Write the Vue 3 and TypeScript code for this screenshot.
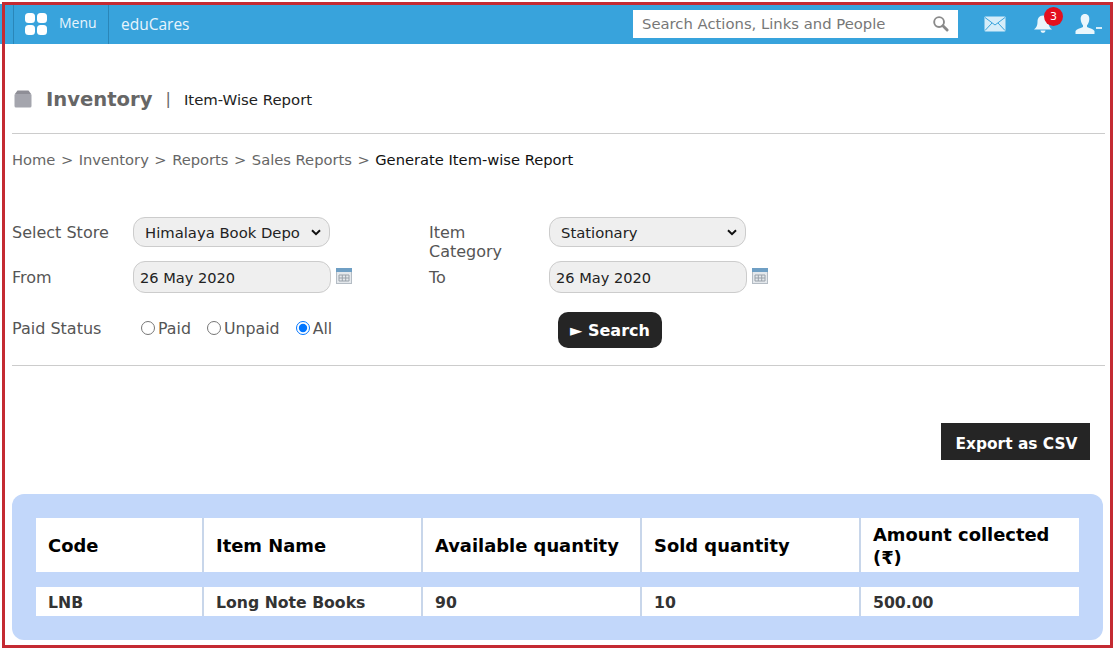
<template>
  <div class="page">
    <header class="topbar">
      <div class="menu-btn">
        <svg class="menu-icon" viewBox="0 0 22 22" width="22" height="22">
          <rect x="0" y="0" width="10" height="10" rx="3.5" fill="#fff" />
          <rect x="12" y="0" width="10" height="10" rx="3.5" fill="#fff" />
          <rect x="0" y="12" width="10" height="10" rx="3.5" fill="#fff" />
          <rect x="12" y="12" width="10" height="10" rx="3.5" fill="#fff" />
        </svg>
        <span class="menu-text">Menu</span>
      </div>
      <div class="brand">eduCares</div>
      <div class="search-box">
        <span class="search-text">Search Actions, Links and People</span>
        <svg class="search-icon" viewBox="0 0 18 18" width="17" height="17" fill="none" stroke="#8a8a8a">
          <circle cx="7.5" cy="7.5" r="5.2" stroke-width="2" />
          <path d="M11.5 11.5L16 16" stroke-width="3" stroke-linecap="round" />
        </svg>
      </div>
      <svg class="mail-icon" viewBox="0 0 22 16" width="22" height="16">
        <rect x="0.5" y="0.5" width="21" height="15" rx="1" fill="#d6edf9" />
        <path d="M1 1.5L11 9L21 1.5M1 14.5L8 7M21 14.5L14 7" fill="none" stroke="#38a3dc" stroke-width="1" />
      </svg>
      <div class="bell-wrap">
        <svg viewBox="0 0 20 20" width="20" height="20">
          <path d="M10 1.5C6 1.5 4.5 4.5 4.5 8C4.500 11.500 3.500 13.500 1 15.500H19C16.500 13.500 15.500 11.500 15.500 8C15.500 4.500 14 1.500 10 1.500Z" fill="#eaf6fc" />
          <path d="M7.500 16.500H12.500C12.300 18 11.300 18.800 10 18.800C8.700 18.800 7.700 18 7.500 16.500Z" fill="#eaf6fc" />
        </svg>
        <span class="badge">3</span>
      </div>
      <div class="user-wrap">
        <svg viewBox="0 0 20 22" width="20" height="22">
          <path d="M10 1C6.800 1 5.500 3.400 5.700 6.500C5.900 9 6.800 11 8 12.200V14C5 15.500 1.500 16 0.500 18V21H19.500V18C18.500 16 15 15.500 12 14V12.200C13.200 11 14.100 9 14.300 6.500C14.500 3.400 13.200 1 10 1Z" fill="#eaf6fc" />
        </svg>
        <span class="caret"></span>
      </div>
    </header>

    <main class="content">
      <div class="title-row">
        <svg class="box-icon" viewBox="0 0 18 18" width="18" height="18">
          <path d="M3.500 0.500H14.500L17.500 4.500H0.500Z" fill="#8e8e96" />
          <rect x="0.500" y="4" width="17" height="13.500" rx="1.500" fill="#a4a5ad" />
        </svg>
        <h1 class="title">Inventory</h1>
        <span class="title-sep">|</span>
        <span class="subtitle">Item-Wise Report</span>
      </div>

      <nav class="crumbs">
        <template v-for="c in crumbs" :key="c">
          <span>{{ c }}</span><span class="gt">&gt;</span>
        </template>
        <span class="crumb-current">Generate Item-wise Report</span>
      </nav>

      <form class="filter" @submit.prevent>
        <label class="lbl">Select Store</label>
        <select class="ctl sel">
          <option>Himalaya Book Depo</option>
        </select>
        <label class="lbl">Item<br />Category</label>
        <select class="ctl sel">
          <option>Stationary</option>
        </select>

        <label class="lbl lbl-date">From</label>
        <div class="date-cell">
          <input class="ctl date" value="26 May 2020" />
          <svg class="cal" viewBox="0 0 16 16" width="16" height="16">
            <rect x="0.500" y="0.500" width="15" height="15" fill="#e4e8ec" stroke="#b4bcc4" />
            <rect x="0" y="0" width="16" height="4" fill="#6f9fc4" />
            <path d="M3 7H13M3 10H13M3 13H13M3 7V13M6.300 7V13M9.700 7V13M13 7V13" stroke="#9aa2aa" stroke-width="1" fill="none" />
          </svg>
        </div>
        <label class="lbl lbl-date">To</label>
        <div class="date-cell">
          <input class="ctl date" value="26 May 2020" />
          <svg class="cal" viewBox="0 0 16 16" width="16" height="16">
            <rect x="0.500" y="0.500" width="15" height="15" fill="#e4e8ec" stroke="#b4bcc4" />
            <rect x="0" y="0" width="16" height="4" fill="#6f9fc4" />
            <path d="M3 7H13M3 10H13M3 13H13M3 7V13M6.300 7V13M9.700 7V13M13 7V13" stroke="#9aa2aa" stroke-width="1" fill="none" />
          </svg>
        </div>

        <label class="lbl status-lbl">Paid Status</label>
        <div class="radios">
          <label v-for="s in statuses" :key="s" class="radio">
            <input type="radio" name="paid" :value="s" v-model="status" />{{ s }}
          </label>
        </div>
        <div class="search-cell">
          <button class="search-btn" type="button">► Search</button>
        </div>
      </form>

      <div class="export-row">
        <button class="export-btn" type="button">Export as CSV</button>
      </div>

      <section class="panel">
        <div class="grid head">
          <div v-for="h in headers" :key="h" class="cell">{{ h }}</div>
        </div>
        <div class="grid row">
          <div v-for="(v, i) in rowData" :key="i" class="cell">{{ v }}</div>
        </div>
      </section>
    </main>

    <div class="frame"></div>
  </div>
</template>

<script setup lang="ts">
import { ref } from 'vue'

const crumbs = ['Home', 'Inventory', 'Reports', 'Sales Reports']
const statuses = ['Paid', 'Unpaid', 'All']
const status = ref('All')

const headers = ['Code', 'Item Name', 'Available quantity', 'Sold quantity', 'Amount collected (₹)']
const rowData = ['LNB', 'Long Note Books', '90', '10', '500.00']
</script>

<style>
html,
body {
  margin: 0;
  background: #fff;
  overflow: hidden;
}
</style>

<style scoped>
.page {
  position: relative;
  width: 1115px;
  height: 650px;
  overflow: hidden;
  background: #fff;
  font-family: "DejaVu Sans", Verdana, sans-serif;
  color: #555;
}

/* red frame sits on top of everything */
.frame {
  position: absolute;
  left: 2px;
  top: 2px;
  width: 1111px;
  height: 646px;
  box-sizing: border-box;
  border: 3px solid #c42a32;
  pointer-events: none;
}

.topbar {
  display: flex;
  align-items: center;
  height: 40px;
  margin-top: 4px;
  margin-right: 5px;
  background: #38a3dc;
}

.menu-btn {
  display: flex;
  align-items: center;
  height: 40px;
  margin-left: 13px;
  width: 94px;
  box-sizing: content-box;
  border-left: 1px solid #2a86b8;
  border-right: 1px solid #2a86b8;
}

.menu-icon {
  margin-left: 11px;
}

.menu-text {
  margin-left: 12px;
  margin-top: -3px;
  font-family: "Open Sans", sans-serif;
  font-size: 14px;
  color: #e8f5fc;
}

.brand {
  margin-left: 12px;
  font-family: "Open Sans", sans-serif;
  font-size: 15.5px;
  color: #e8f5fc;
}

.search-box {
  display: flex;
  align-items: center;
  justify-content: space-between;
  margin-left: auto;
  margin-top: -1px;
  width: 325px;
  height: 28px;
  box-sizing: border-box;
  padding: 0 9px;
  background: #fff;
}

.search-text {
  font-size: 14.8px;
  color: #777;
}

.mail-icon {
  margin-left: 26px;
}

.bell-wrap {
  position: relative;
  display: flex;
  margin-left: 27px;
}

.badge {
  position: absolute;
  left: 11px;
  top: -7px;
  width: 19px;
  height: 19px;
  border-radius: 50%;
  background: #e3101e;
  color: #fff;
  font-size: 11px;
  line-height: 19px;
  text-align: center;
}

.user-wrap {
  display: flex;
  align-items: center;
  margin-left: 22px;
  margin-right: 8px;
}

.caret {
  width: 6px;
  height: 2px;
  margin: 8px 0 0 1px;
  background: #d6edf9;
}

.content {
  padding: 0 10px 0 12px;
}

.title-row {
  display: flex;
  align-items: center;
  box-sizing: content-box;
  height: 67px;
  padding-top: 22px;
  border-bottom: 1px solid #ccc;
}

.box-icon {
  margin-left: 2px;
  margin-top: -2px;
}

.title {
  margin: 0 0 0 14px;
  font-size: 19.6px;
  font-weight: 700;
  color: #666;
}

.title-sep {
  margin: -2px 0 0 13px;
  font-size: 16px;
  color: #666;
}

.subtitle {
  margin-left: 13px;
  font-size: 14.9px;
  color: #222;
}

.crumbs {
  display: flex;
  height: 83px;
  padding-top: 17px;
  box-sizing: border-box;
  font-size: 14.7px;
  line-height: 18px;
  color: #666;
}

.gt {
  margin: 0 5.5px;
}

.crumb-current {
  color: #111;
}

.filter {
  display: grid;
  grid-template-columns: 121px 296px 120px 1fr;
  grid-template-rows: 44px 51px 73px;
  border-bottom: 1px solid #ccc;
  height: 148px;
}

.lbl {
  font-size: 16px;
  line-height: 19px;
  color: #555;
  padding-top: 6px;
  white-space: nowrap;
}

.lbl-date {
  padding-top: 7px;
}

.status-lbl {
  padding-top: 7px;
}

.ctl {
  box-sizing: border-box;
  font-family: "DejaVu Sans", Verdana, sans-serif;
  font-size: 14.8px;
  color: #222;
  background-color: #efefef;
  border: 1px solid #ccc;
}

.sel {
  appearance: none;
  width: 197px;
  height: 30px;
  padding-left: 11px;
  border-radius: 12px;
  background-image: url("data:image/svg+xml,%3Csvg xmlns='http://www.w3.org/2000/svg' width='10' height='7' viewBox='0 0 10 7'%3E%3Cpath d='M1 1.200L5 5.200L9 1.200' fill='none' stroke='%23111' stroke-width='2'/%3E%3C/svg%3E");
  background-repeat: no-repeat;
  background-position: right 8px center;
}

.date-cell {
  display: flex;
  align-items: flex-start;
}

.date {
  width: 198px;
  height: 32px;
  padding: 0 6px;
  border-radius: 12px;
  outline: none;
  font-size: 14.6px;
}

.cal {
  margin: 7px 0 0 5px;
}

.radios {
  display: flex;
  align-items: flex-start;
  padding-left: 7px;
  gap: 15px;
}

.radio {
  display: flex;
  align-items: center;
  height: 18px;
  margin-top: 7px;
  font-size: 15.8px;
  color: #555;
}

.radio input {
  width: 14px;
  height: 14px;
  margin: 0 3px 0 1px;
}

.search-cell {
  grid-column: 3 / 5;
  padding-left: 129px;
}

.search-btn {
  width: 104px;
  height: 36px;
  padding: 0;
  border: none;
  border-radius: 10px;
  background: #252525;
  color: #fff;
  font-family: "DejaVu Sans", Verdana, sans-serif;
  font-size: 16px;
  font-weight: 700;
}

.export-row {
  display: flex;
  justify-content: flex-end;
  height: 128px;
  padding-top: 57px;
  padding-right: 15px;
  box-sizing: border-box;
}

.export-btn {
  width: 149px;
  height: 37px;
  padding: 5px 0 0 2px;
  border: none;
  background: #252525;
  color: #fff;
  font-family: "DejaVu Sans", Verdana, sans-serif;
  font-size: 15.4px;
  font-weight: 700;
}

.panel {
  box-sizing: border-box;
  width: 1091px;
  height: 146px;
  padding: 24px;
  background: #c2d7fa;
  border-radius: 12px;
}

.grid {
  display: grid;
  grid-template-columns: 166px 217px 217px 217px 1fr;
  gap: 0 2px;
  background: #c8d6ea;
}

.cell {
  display: flex;
  align-items: center;
  box-sizing: border-box;
  padding: 0 12px;
  background: #fff;
  font-weight: 700;
  color: #333;
}

.head {
  height: 54px;
  margin-bottom: 15px;
}

.head .cell {
  padding-top: 1px;
  font-size: 17.9px;
  line-height: 23px;
  color: #000;
}

.row {
  height: 29px;
}

.row .cell {
  padding-top: 2px;
  font-size: 15.7px;
}
</style>
